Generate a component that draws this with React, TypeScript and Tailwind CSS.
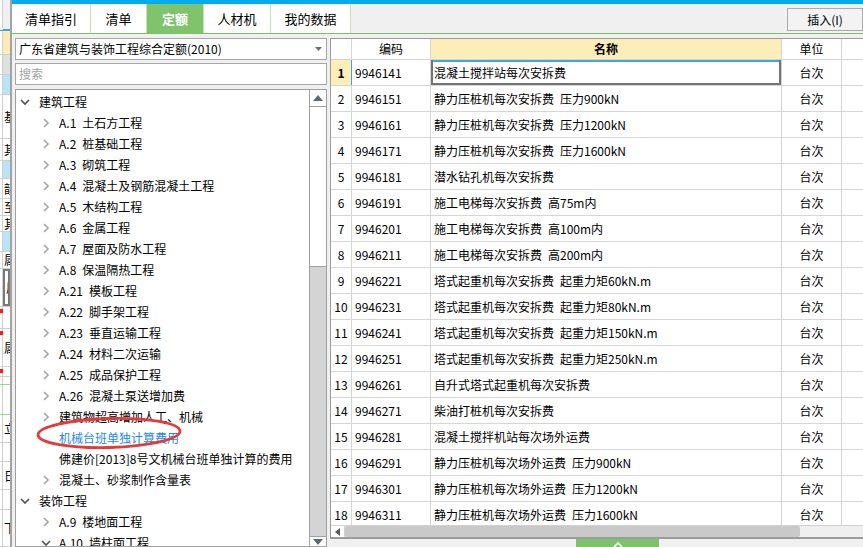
import React from "react";

type TreeItem = {
  level: 0 | 1;
  chevron: "down" | "right" | "none";
  label?: string;
  text: string;
  blue?: boolean;
};

const tree: TreeItem[] = [
  { level: 0, chevron: "down", text: "建筑工程" },
  { level: 1, chevron: "right", label: "A.1", text: "土石方工程" },
  { level: 1, chevron: "right", label: "A.2", text: "桩基础工程" },
  { level: 1, chevron: "right", label: "A.3", text: "砌筑工程" },
  { level: 1, chevron: "right", label: "A.4", text: "混凝土及钢筋混凝土工程" },
  { level: 1, chevron: "right", label: "A.5", text: "木结构工程" },
  { level: 1, chevron: "right", label: "A.6", text: "金属工程" },
  { level: 1, chevron: "right", label: "A.7", text: "屋面及防水工程" },
  { level: 1, chevron: "right", label: "A.8", text: "保温隔热工程" },
  { level: 1, chevron: "right", label: "A.21", text: "模板工程" },
  { level: 1, chevron: "right", label: "A.22", text: "脚手架工程" },
  { level: 1, chevron: "right", label: "A.23", text: "垂直运输工程" },
  { level: 1, chevron: "right", label: "A.24", text: "材料二次运输" },
  { level: 1, chevron: "right", label: "A.25", text: "成品保护工程" },
  { level: 1, chevron: "right", label: "A.26", text: "混凝土泵送增加费" },
  { level: 1, chevron: "right", text: "建筑物超高增加人工、机械" },
  { level: 1, chevron: "none", text: "机械台班单独计算费用", blue: true },
  { level: 1, chevron: "none", text: "佛建价[2013]8号文机械台班单独计算的费用" },
  { level: 1, chevron: "right", text: "混凝土、砂浆制作含量表" },
  { level: 0, chevron: "down", text: "装饰工程" },
  { level: 1, chevron: "right", label: "A.9", text: "楼地面工程" },
  { level: 1, chevron: "down", label: "A.10", text: "墙柱面工程" },
];

const rows: [string, string][] = [
  ["9946141", "混凝土搅拌站每次安拆费"],
  ["9946151", "静力压桩机每次安拆费 压力900kN"],
  ["9946161", "静力压桩机每次安拆费 压力1200kN"],
  ["9946171", "静力压桩机每次安拆费 压力1600kN"],
  ["9946181", "潜水钻孔机每次安拆费"],
  ["9946191", "施工电梯每次安拆费 高75m内"],
  ["9946201", "施工电梯每次安拆费 高100m内"],
  ["9946211", "施工电梯每次安拆费 高200m内"],
  ["9946221", "塔式起重机每次安拆费 起重力矩60kN.m"],
  ["9946231", "塔式起重机每次安拆费 起重力矩80kN.m"],
  ["9946241", "塔式起重机每次安拆费 起重力矩150kN.m"],
  ["9946251", "塔式起重机每次安拆费 起重力矩250kN.m"],
  ["9946261", "自升式塔式起重机每次安拆费"],
  ["9946271", "柴油打桩机每次安拆费"],
  ["9946281", "混凝土搅拌机站每次场外运费"],
  ["9946291", "静力压桩机每次场外运费 压力900kN"],
  ["9946301", "静力压桩机每次场外运费 压力1200kN"],
  ["9946311", "静力压桩机每次场外运费 压力1600kN"],
];

// the partly hidden grid on the far left
const strip: { h: number; bg: string; ch?: string; red?: boolean; sel?: boolean; line?: string }[] = [
  { h: 29, bg: "#f0f0f0", line: "transparent" },
  { h: 2, bg: "#3ca6dc", line: "transparent" },
  { h: 24, bg: "#fdebb7" },
  { h: 20, bg: "#dce3df" },
  { h: 20, bg: "#b7e5f6" },
  { h: 44, bg: "#ffffff", ch: "基" },
  { h: 22, bg: "#ffffff", ch: "其" },
  { h: 18, bg: "#b7e5f6" },
  { h: 20, bg: "#ffffff", ch: "韻" },
  { h: 17, bg: "#ffffff", ch: "至" },
  { h: 16, bg: "#ffffff", ch: "其" },
  { h: 20, bg: "#b7e5f6" },
  { h: 17, bg: "#ffffff", ch: "属" },
  { h: 38, bg: "#ffffff", ch: "属", sel: true },
  { h: 22, bg: "#ffffff", red: true },
  { h: 38, bg: "#ffffff", ch: "属", red: true },
  { h: 10, bg: "#ffffff", red: true },
  { h: 8, bg: "#ffffff", line: "#9fd48e" },
  { h: 30, bg: "#ffffff", line: "#9fd48e" },
  { h: 28, bg: "#ffffff", ch: "立" },
  { h: 19, bg: "#ffffff" },
  { h: 28, bg: "#ffffff", ch: "日" },
  { h: 20, bg: "#ffffff" },
  { h: 37, bg: "#ffffff", ch: "下" },
];

function ChevronDown({ color }: { color: string }) {
  return (
    <svg width="10" height="6" viewBox="0 0 10 6">
      <path d="M1 1l4 4 4-4" fill="none" stroke={color} strokeWidth="1.7" />
    </svg>
  );
}

function ChevronRight() {
  return (
    <svg width="6" height="10" viewBox="0 0 6 10">
      <path d="M1 1l4 4-4 4" fill="none" stroke="#a9a9a9" strokeWidth="1.7" />
    </svg>
  );
}

function LeftStrip() {
  return (
    <div className="flex w-[10px] shrink-0 flex-col overflow-hidden">
      {strip.map((r, i) => (
        <div
          key={i}
          className="relative flex shrink-0 overflow-hidden border-b"
          style={{ height: r.h, background: r.bg, borderColor: r.line ?? "#cfcfcf" }}
        >
          <div className="w-[3px] shrink-0 border-r border-[#cfcfcf] bg-white">
            {r.red && <div className="mt-[2px] h-[4px] w-[3px] bg-[#ff1a1a]" />}
          </div>
          <div
            className={`flex flex-1 items-center overflow-hidden pl-[1px] text-[12px] ${
              r.sel ? "border-2 border-[#7a7a7a]" : ""
            }`}
          >
            {r.ch}
          </div>
        </div>
      ))}
    </div>
  );
}

function Tree() {
  return (
    <div className="relative flex-1 overflow-hidden pt-[1px]">
      {tree.map((t, i) => (
        <div
          key={i}
          className={`flex h-[21px] items-center whitespace-nowrap ${t.level === 0 ? "pl-[4px]" : "pl-[25px]"}`}
        >
          <div className="flex w-[10px] justify-center">
            {t.chevron === "down" && <ChevronDown color="#555555" />}
            {t.chevron === "right" && <ChevronRight />}
          </div>
          <span className={`${t.level === 0 ? "ml-[9px]" : "ml-[8px]"} ${t.blue ? "text-[#1a8ae8]" : ""}`}>
            {t.label && <span className="mr-[6px]">{t.label}</span>}
            {t.text}
          </span>
        </div>
      ))}
      <svg
        className="pointer-events-none absolute left-[20px] top-[326px]"
        width="148"
        height="34"
        viewBox="0 0 148 34"
      >
        <ellipse cx="73" cy="17" rx="71" ry="14.5" fill="none" stroke="#e63a3a" strokeWidth="2.8" transform="rotate(-1.5 73 17)" />
      </svg>
    </div>
  );
}

function TreeScrollbar() {
  return (
    <div className="flex w-[17px] shrink-0 flex-col border-l border-[#a0a0a0] bg-[#d4d4d4]">
      <div className="flex h-[17px] shrink-0 items-center justify-center border-b border-[#a0a0a0] bg-white">
        <svg width="10" height="6" viewBox="0 0 10 6">
          <path d="M0 6L5 0l5 6z" fill="#606878" />
        </svg>
      </div>
      <div className="h-[160px] shrink-0 border-b border-[#a0a0a0] bg-white" />
      <div className="flex-1" />
      <div className="flex h-[10px] shrink-0 items-end justify-center border-t border-[#a0a0a0] bg-white pb-[1px]">
        <svg width="10" height="6" viewBox="0 0 10 6">
          <path d="M0 0h10L5 6z" fill="#606878" />
        </svg>
      </div>
    </div>
  );
}

function Table() {
  return (
    <div className="flex min-h-0 flex-1 flex-col border-b-2 border-l border-t border-[#9c9c9c] bg-white">
      <div className="flex h-[21px] shrink-0 border-b border-[#d4d4d4]">
        <div className="w-[21px] shrink-0 border-r border-[#d4d4d4]" />
        <div className="flex w-[79px] shrink-0 items-center justify-center border-r border-[#d4d4d4]">编码</div>
        <div className="flex w-[351px] shrink-0 items-center justify-center border-r border-[#d4d4d4] bg-[#fdedb6] font-bold">
          名称
        </div>
        <div className="flex w-[60px] shrink-0 items-center justify-center border-r border-[#d4d4d4]">单位</div>
        <div className="flex-1" />
      </div>
      <div className="min-h-0 flex-1 overflow-hidden">
        {rows.map(([code, name], i) => {
          const first = i === 0;
          return (
            <div key={code} className="flex h-[26px] shrink-0 border-b border-[#d6d6d6]">
              <div
                className={`flex w-[21px] shrink-0 items-center justify-center border-r ${
                  first ? "border-[#3ba7dd] bg-[#fdedb6] font-bold" : "border-[#d4d4d4]"
                }`}
              >
                {i + 1}
              </div>
              <div className="flex w-[79px] shrink-0 items-center border-r border-[#d4d4d4] pl-[3px]">{code}</div>
              <div
                className={`flex w-[351px] shrink-0 items-center whitespace-nowrap border-r border-[#d4d4d4] pl-[3px] ${
                  first
                    ? "shadow-[inset_2px_0_0_#737373,inset_-2px_0_0_#737373,inset_0_-2px_0_#737373,inset_0_2px_0_#3ba7dd]"
                    : ""
                }`}
              >
                {name.replace(" ", "\u2002")}
              </div>
              <div className="flex w-[60px] shrink-0 items-center justify-center border-r border-[#d4d4d4]">台次</div>
              <div className="flex-1" />
            </div>
          );
        })}
      </div>
      <div className="flex h-[12px] shrink-0 border-t border-[#d0d0d0] bg-[#efefef]">
        <div className="flex w-[14px] shrink-0 items-center justify-center border-r border-[#d0d0d0] bg-white">
          <svg width="5" height="8" viewBox="0 0 5 8">
            <path d="M5 0v8L0 4z" fill="#5a5a5a" />
          </svg>
        </div>
        <div className="w-[455px] shrink-0 rounded-[2px] bg-[#c9c9c9]" />
      </div>
    </div>
  );
}

const tabs = [
  { label: "清单指引", w: "w-[79px]" },
  { label: "清单", w: "w-[56px]" },
  { label: "定额", w: "w-[57px]", active: true },
  { label: "人材机", w: "w-[67px]" },
  { label: "我的数据", w: "w-[80px]" },
];

export default function App() {
  return (
    <div className="flex h-[547px] w-[863px] overflow-hidden bg-[#f0f0f0] font-['Noto_Sans_CJK_SC',sans-serif] text-[12px] leading-none text-black">
      <LeftStrip />
      <div className="flex min-w-0 flex-1 flex-col overflow-hidden border-l-2 border-[#a3a3a3]">
        <div className="h-[4px] shrink-0 bg-[#00acee]" />
        <div className="flex h-[29px] shrink-0 bg-[#f0f0f0]">
          {tabs.map((t) => (
            <div
              key={t.label}
              className={`${t.w} flex shrink-0 items-center justify-center border-r border-[#c3e5b5] text-[13px] ${
                t.active ? "bg-[#7fc36c] font-bold text-white" : "bg-white"
              }`}
            >
              {t.label}
            </div>
          ))}
          <div className="ml-auto mb-[2px] mt-[4px] flex w-[76px] items-center justify-center border border-[#ababab] bg-[#f3f3f3]">
            插入(I)
          </div>
        </div>
        <div className="h-[1px] shrink-0 bg-[#78c064]" />
        <div className="flex min-h-0 flex-1 gap-[3px] pl-[3px] pt-[4px]">
          <div className="flex w-[312px] shrink-0 flex-col">
            <div className="flex h-[22px] shrink-0 items-center justify-between border border-[#a6a6a6] bg-white pl-[3px] pr-[4px]">
              <span>广东省建筑与装饰工程综合定额(2010)</span>
              <svg width="7" height="4" viewBox="0 0 7 4">
                <path d="M0 0h7L3.5 4z" fill="#6e6e6e" />
              </svg>
            </div>
            <div className="mt-[3px] flex h-[22px] shrink-0 items-center border border-[#a6a6a6] bg-white pl-[3px] text-[#a3a3a3]">
              搜索
            </div>
            <div className="mt-[4px] flex min-h-0 flex-1 border border-[#a0a0a0] bg-white">
              <Tree />
              <TreeScrollbar />
            </div>
          </div>
          <div className="flex w-[545px] shrink-0 flex-col">
            <Table />
            <div className="flex h-[8px] shrink-0">
              <div className="ml-[246px] flex w-[83px] justify-center bg-[#7dc36b] pt-[3px]">
                <svg width="10" height="5" viewBox="0 0 10 5">
                  <path d="M1 5l4-4 4 4" fill="none" stroke="#ffffff" strokeWidth="1.6" />
                </svg>
              </div>
            </div>
          </div>
        </div>
      </div>
    </div>
  );
}
